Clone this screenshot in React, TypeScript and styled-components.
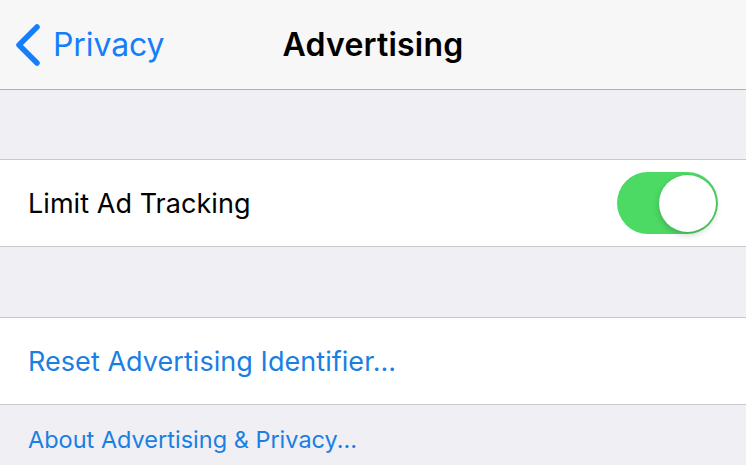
import styled, { createGlobalStyle } from 'styled-components'

const GlobalStyle = createGlobalStyle`
	html, body {
		margin: 0;
		padding: 0;
		background: #efeff4;
		font-family: 'Inter', 'Liberation Sans', sans-serif;
		-webkit-font-smoothing: antialiased;
	}
`

const Screen = styled.div`
	width: 746px;
	height: 465px;
	overflow: hidden;
	background: #efeff4;
	display: flex;
	flex-direction: column;
`

const NavBar = styled.header`
	height: 89px;
	flex-shrink: 0;
	background: #f7f7f8;
	border-bottom: 1px solid #b2b2b6;
	display: grid;
	grid-template-columns: 1fr auto 1fr;
	align-items: center;
`

const BackButton = styled.a`
	display: flex;
	align-items: center;
	gap: 11px;
	padding-left: 14px;
	color: #157efb;
	font-size: 32px;
	letter-spacing: -0.1px;
	text-decoration: none;
	& > svg {
		flex-shrink: 0;
	}
`

const Title = styled.h1`
	margin: 0;
	font-size: 32px;
	font-weight: 600;
	color: #000;
	letter-spacing: 0.2px;
`

const Gap = styled.div<{ h: number }>`
	height: ${({ h }) => h}px;
	flex-shrink: 0;
`

const Group = styled.section`
	background: #fff;
	border-top: 1px solid #c8c7cc;
	border-bottom: 1px solid #c8c7cc;
	flex-shrink: 0;
`

const Row = styled.div`
	height: 86px;
	display: flex;
	align-items: center;
	justify-content: space-between;
	padding: 0 28px 0 28px;
`

const Label = styled.span<{ link?: boolean }>`
	font-size: 27px;
	color: ${({ link }) => (link ? '#1a7fe3' : '#000')};
	letter-spacing: 0.05px;
`

const Switch = styled.div<{ on: boolean }>`
	width: 101px;
	height: 62px;
	border-radius: 31px;
	background: ${({ on }) => (on ? '#4cd964' : '#e5e5ea')};
	display: flex;
	align-items: center;
	justify-content: ${({ on }) => (on ? 'flex-end' : 'flex-start')};
	padding: 0 2px;
	box-sizing: border-box;
`

const Knob = styled.span`
	width: 57px;
	height: 57px;
	border-radius: 50%;
	background: #fff;
	box-shadow: 0 3px 6px rgba(0, 0, 0, 0.18), 0 0 0 0.5px rgba(0, 0, 0, 0.06);
`

const Footer = styled.div`
	padding: 20px 28px 0;
`

const FooterLink = styled.a`
	font-size: 23.5px;
	color: #1a7fe3;
	text-decoration: none;
`

const Chevron = () => (
	<svg width="28" height="42" viewBox="0 0 28 42">
		<polyline
			points="23,3 5,21 23,39"
			fill="none"
			stroke="#157efb"
			strokeWidth="5.5"
			strokeLinecap="round"
			strokeLinejoin="round"
		/>
	</svg>
)

const App = () => {
	return (
		<>
			<GlobalStyle />
			<Screen>
				<NavBar>
					<BackButton>
						<Chevron />
						Privacy
					</BackButton>
					<Title>Advertising</Title>
					<span />
				</NavBar>
				<Gap h={69} />
				<Group>
					<Row>
						<Label>Limit Ad Tracking</Label>
						<Switch on>
							<Knob />
						</Switch>
					</Row>
				</Group>
				<Gap h={70} />
				<Group>
					<Row>
						<Label link>Reset Advertising Identifier...</Label>
					</Row>
				</Group>
				<Footer>
					<FooterLink>About Advertising &amp; Privacy...</FooterLink>
				</Footer>
			</Screen>
		</>
	)
}

export default App
